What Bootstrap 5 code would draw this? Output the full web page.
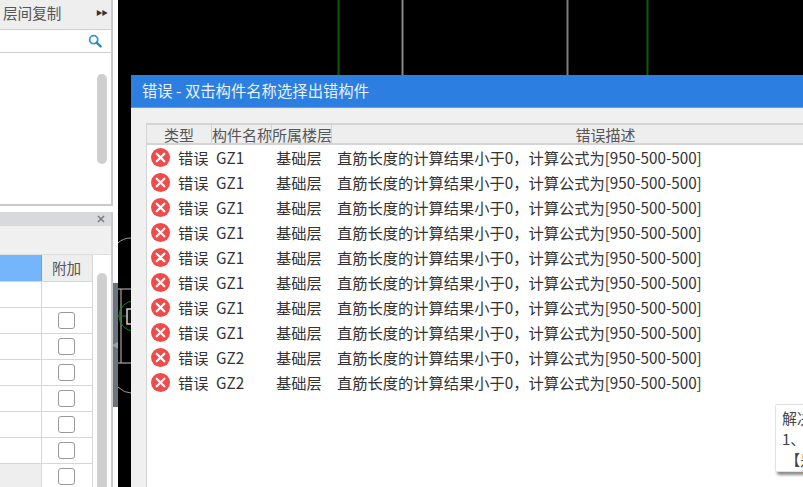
<!DOCTYPE html>
<html lang="zh">
<head>
<meta charset="utf-8">
<title>错误</title>
<link rel="stylesheet" href="https://cdn.jsdelivr.net/npm/bootstrap@5.3.0/dist/css/bootstrap.min.css">
<style>
html,body{height:487px;overflow:hidden;}
body{font-family:"Noto Sans CJK SC","Liberation Sans",sans-serif;font-size:15.25px;color:#333;background:#fff;position:relative;width:803px;}
.stage{height:487px;overflow:hidden;}
.leftcol{width:113px;flex:none;}
.splitcol{width:5px;flex:none;}
.grip{height:124px;margin-top:283px;background:#6a757e;color:#9aa3aa;font-size:8px;}
.canvasarea{background:#000;position:relative;}
.cadlines{position:absolute;left:0;top:0;width:685px;height:487px;}
.toppanel{height:206px;border-right:2px solid #c9c9c9;border-bottom:2px solid #c9c9c9;}
.tophead{height:30px;background:#eee;border-bottom:1px solid #cfcfcf;padding:0 0 3px 3px;color:#555;font-size:14.6px;}
.arrows{font-size:6.5px;color:#333;letter-spacing:-1px;margin-right:4px;}
.searchbar{height:23px;border-bottom:1px solid #cfcfcf;padding-right:9px;}
.listarea{height:151px;position:relative;}
.sbar{position:absolute;background:#cfcfcf;border-radius:5px;width:10px;left:97px;}
.sbar1{top:21px;height:90px;}
.gapline{height:6px;}
.bottompanel{height:275px;border-right:2px solid #c9c9c9;position:relative;overflow:hidden;}
.closebar{height:14px;background:#d8d9dd;padding-right:6px;}
.toolrow{height:29px;background:#f0f0f0;border-bottom:1px solid #ddd;}
.sbar2{top:61px;height:240px;}
.proptable{width:92px;table-layout:fixed;margin:0;border-collapse:collapse;}
.proptable td,.proptable th{height:26px;padding:0;border:1px solid #d6d6d6;border-top:0;border-left:0;text-align:center;font-weight:400;vertical-align:middle;background:#fff;}
.proptable th{background:#eee;color:#555;font-size:14.6px;}
.proptable th.selcol{background:#75b5fb;border-right-color:#5aa5f5;}
.proptable td.greycell{background:#eee;}
.colsel{width:41px;}
.coladd{width:51px;}
.tick{display:block;width:17px;height:17px;margin:0 auto;border:1.5px solid #999;border-radius:3px;background:#fff;}
.errwin{position:absolute;left:131px;top:75px;width:672px;height:412px;background:#f0f0f0;overflow:hidden;}
.wintitle{height:33px;background:#2c7fe0;color:#e8f1fc;padding-left:11px;border-bottom:1px solid #5d9fe8;font-size:15.35px;}
.winbody{padding:15px 0 0 15px;}
.gridwrap{background:#fff;height:364px;border-left:1px solid #d4d4d4;border-top:2px solid #d4d4d4;}
.errhead{height:20px;background:#eee;border-bottom:2px solid #d4d4d4;color:#555;line-height:20px;font-size:15px;}
.errhead>div{border-right:1px solid #d0d0d0;text-align:center;white-space:nowrap;height:18px;flex:none;}
.hdtype{width:65px;}
.hdname{width:60px;}
.hdfloor{width:60px;}
.hddesc{flex:1 1 auto!important;border-right:0!important;padding-left:76px;}
.errrow{height:25px;color:#333;white-space:nowrap;}
.erricon{width:19px;height:19px;flex:none;margin-left:4px;}
.ctype{margin-left:8px;width:38px;flex:none;}
.cname{width:60px;flex:none;}
.cfloor{width:61px;flex:none;}
.tipbox{position:absolute;left:775px;top:404px;width:40px;height:68px;background:#fff;border:1px solid #e2e2e2;border-radius:2px;box-shadow:2px 3px 3px rgba(0,0,0,.45);padding:2px 0 0 6px;line-height:21px;white-space:nowrap;overflow:hidden;font-size:15px;color:#444;}
</style>
</head>
<body>
<div class="stage d-flex">
  <div class="leftcol">
    <div class="toppanel">
      <div class="tophead d-flex align-items-center justify-content-between"><span>层间复制</span><span class="arrows">&#9654;&#9654;</span></div>
      <div class="searchbar d-flex align-items-center justify-content-end">
        <svg width="14" height="14" viewBox="0 0 14 14"><circle cx="5.7" cy="5.7" r="4" fill="none" stroke="#3d97c8" stroke-width="1.8"/><path d="M8.6 8.6L12.6 12.4" stroke="#2f86b8" stroke-width="2.4" stroke-linecap="round"/></svg>
      </div>
      <div class="listarea"><div class="sbar sbar1"></div></div>
    </div>
    <div class="gapline"></div>
    <div class="bottompanel">
      <div class="closebar d-flex align-items-center justify-content-end"><svg width="8" height="8" viewBox="0 0 8 8"><path d="M1 1L7 7M7 1L1 7" stroke="#808080" stroke-width="1.7"/></svg></div>
      <div class="toolrow"></div>
      <table class="proptable">
        <colgroup><col class="colsel"><col class="coladd"></colgroup>
        <tr><th class="selcol"></th><th>附加</th></tr>
        <tr><td></td><td></td></tr>
        <tr><td></td><td><span class="tick"></span></td></tr>
        <tr><td></td><td><span class="tick"></span></td></tr>
        <tr><td></td><td><span class="tick"></span></td></tr>
        <tr><td></td><td><span class="tick"></span></td></tr>
        <tr><td></td><td><span class="tick"></span></td></tr>
        <tr><td></td><td><span class="tick"></span></td></tr>
        <tr><td class="greycell"></td><td><span class="tick"></span></td></tr>
      </table>
      <div class="sbar sbar2"></div>
    </div>
  </div>
  <div class="splitcol"><div class="grip d-flex align-items-center justify-content-center">&#9664;</div></div>
  <div class="canvasarea flex-grow-1">
    <svg class="cadlines" viewBox="0 0 685 487">
      <line x1="220.5" y1="0" x2="220.5" y2="75" stroke="#0c5a0c" stroke-width="2"/>
      <line x1="284.5" y1="0" x2="284.5" y2="75" stroke="#8a8a8a" stroke-width="2"/>
      <line x1="449.5" y1="0" x2="449.5" y2="75" stroke="#7d7d7d" stroke-width="2"/>
      <line x1="529.5" y1="0" x2="529.5" y2="75" stroke="#0c5a0c" stroke-width="2"/>
      <path d="M0 243Q5 238 13 238" fill="none" stroke="#999" stroke-width="1"/>
      <path d="M0 387Q6 393 13 393" fill="none" stroke="#999" stroke-width="1"/>
      <path d="M3 289V363M0 289H13M0 363H13" fill="none" stroke="#c4c4c4" stroke-width="1"/>
      <circle cx="16" cy="316" r="15" fill="none" stroke="#0e8a0e" stroke-width="1"/>
      <path d="M0 316H13" stroke="#0e8a0e" stroke-width="1"/>
      <rect x="9" y="309" width="6" height="15" fill="#111" stroke="#ddd" stroke-width="1.4"/>
    </svg>
  </div>
</div>

<div class="errwin">
  <div class="wintitle d-flex align-items-center">错误 - 双击构件名称选择出错构件</div>
  <div class="winbody">
    <div class="gridwrap">
      <div class="errhead d-flex">
        <div class="hdtype">类型</div><div class="hdname">构件名称</div><div class="hdfloor">所属楼层</div><div class="hddesc">错误描述</div>
      </div>
      <div class="errrow d-flex align-items-center"><svg class="erricon" viewBox="0 0 20 20"><circle cx="10" cy="10" r="10" fill="#f04a4a"/><path d="M6 6L14 14M14 6L6 14" stroke="#fff" stroke-width="2.4" stroke-linecap="round"/></svg><span class="ctype">错误</span><span class="cname">GZ1</span><span class="cfloor">基础层</span><span>直筋长度的计算结果小于0，计算公式为[950-500-500]</span></div>
      <div class="errrow d-flex align-items-center"><svg class="erricon" viewBox="0 0 20 20"><circle cx="10" cy="10" r="10" fill="#f04a4a"/><path d="M6 6L14 14M14 6L6 14" stroke="#fff" stroke-width="2.4" stroke-linecap="round"/></svg><span class="ctype">错误</span><span class="cname">GZ1</span><span class="cfloor">基础层</span><span>直筋长度的计算结果小于0，计算公式为[950-500-500]</span></div>
      <div class="errrow d-flex align-items-center"><svg class="erricon" viewBox="0 0 20 20"><circle cx="10" cy="10" r="10" fill="#f04a4a"/><path d="M6 6L14 14M14 6L6 14" stroke="#fff" stroke-width="2.4" stroke-linecap="round"/></svg><span class="ctype">错误</span><span class="cname">GZ1</span><span class="cfloor">基础层</span><span>直筋长度的计算结果小于0，计算公式为[950-500-500]</span></div>
      <div class="errrow d-flex align-items-center"><svg class="erricon" viewBox="0 0 20 20"><circle cx="10" cy="10" r="10" fill="#f04a4a"/><path d="M6 6L14 14M14 6L6 14" stroke="#fff" stroke-width="2.4" stroke-linecap="round"/></svg><span class="ctype">错误</span><span class="cname">GZ1</span><span class="cfloor">基础层</span><span>直筋长度的计算结果小于0，计算公式为[950-500-500]</span></div>
      <div class="errrow d-flex align-items-center"><svg class="erricon" viewBox="0 0 20 20"><circle cx="10" cy="10" r="10" fill="#f04a4a"/><path d="M6 6L14 14M14 6L6 14" stroke="#fff" stroke-width="2.4" stroke-linecap="round"/></svg><span class="ctype">错误</span><span class="cname">GZ1</span><span class="cfloor">基础层</span><span>直筋长度的计算结果小于0，计算公式为[950-500-500]</span></div>
      <div class="errrow d-flex align-items-center"><svg class="erricon" viewBox="0 0 20 20"><circle cx="10" cy="10" r="10" fill="#f04a4a"/><path d="M6 6L14 14M14 6L6 14" stroke="#fff" stroke-width="2.4" stroke-linecap="round"/></svg><span class="ctype">错误</span><span class="cname">GZ1</span><span class="cfloor">基础层</span><span>直筋长度的计算结果小于0，计算公式为[950-500-500]</span></div>
      <div class="errrow d-flex align-items-center"><svg class="erricon" viewBox="0 0 20 20"><circle cx="10" cy="10" r="10" fill="#f04a4a"/><path d="M6 6L14 14M14 6L6 14" stroke="#fff" stroke-width="2.4" stroke-linecap="round"/></svg><span class="ctype">错误</span><span class="cname">GZ1</span><span class="cfloor">基础层</span><span>直筋长度的计算结果小于0，计算公式为[950-500-500]</span></div>
      <div class="errrow d-flex align-items-center"><svg class="erricon" viewBox="0 0 20 20"><circle cx="10" cy="10" r="10" fill="#f04a4a"/><path d="M6 6L14 14M14 6L6 14" stroke="#fff" stroke-width="2.4" stroke-linecap="round"/></svg><span class="ctype">错误</span><span class="cname">GZ1</span><span class="cfloor">基础层</span><span>直筋长度的计算结果小于0，计算公式为[950-500-500]</span></div>
      <div class="errrow d-flex align-items-center"><svg class="erricon" viewBox="0 0 20 20"><circle cx="10" cy="10" r="10" fill="#f04a4a"/><path d="M6 6L14 14M14 6L6 14" stroke="#fff" stroke-width="2.4" stroke-linecap="round"/></svg><span class="ctype">错误</span><span class="cname">GZ2</span><span class="cfloor">基础层</span><span>直筋长度的计算结果小于0，计算公式为[950-500-500]</span></div>
      <div class="errrow d-flex align-items-center"><svg class="erricon" viewBox="0 0 20 20"><circle cx="10" cy="10" r="10" fill="#f04a4a"/><path d="M6 6L14 14M14 6L6 14" stroke="#fff" stroke-width="2.4" stroke-linecap="round"/></svg><span class="ctype">错误</span><span class="cname">GZ2</span><span class="cfloor">基础层</span><span>直筋长度的计算结果小于0，计算公式为[950-500-500]</span></div>
    </div>
  </div>
</div>

<div class="tipbox">解决<br>1、<br>&nbsp;【是</div>
<script src="https://cdn.jsdelivr.net/npm/bootstrap@5.3.0/dist/js/bootstrap.bundle.min.js"></script>
</body>
</html>
